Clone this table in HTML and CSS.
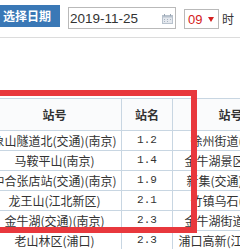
FILE: index.html
```html
<!DOCTYPE html>
<html lang="zh-CN">
<head>
<meta charset="utf-8">
<link rel="stylesheet" href="styles.css">
</head>
<body>
<div class="toolbar">
  <span class="btn">选择日期</span>
  <span class="date-input">
    <span class="date-text">2019-11-25</span>
    <svg class="cal" width="11" height="10" viewBox="0 0 11 10">
      <rect x="0.5" y="1.5" width="10" height="8" fill="#e4e8ee" stroke="#b8c2cd"/>
      <rect x="0.5" y="1.5" width="10" height="2" fill="#b8c2cd"/>
      <rect x="2" y="0" width="1" height="2" fill="#9aa6b3"/>
      <rect x="8" y="0" width="1" height="2" fill="#9aa6b3"/>
      <path d="M2 5h1v1H2zM5 5h1v1H5zM8 5h1v1H8zM2 7h1v1H2zM5 7h1v1H5z" fill="#a9b4c0"/>
    </svg>
  </span>
  <span class="select"><span class="sel-val">09</span><span class="caret"></span></span>
  <span class="unit">时</span>
</div>
<div class="content">
  <table class="grid">
    <colgroup><col class="c1"><col class="c2"><col class="c3"></colgroup>
    <thead>
      <tr><th>站号</th><th>站名</th><th>站号</th></tr>
    </thead>
    <tbody>
      <tr><td>象山隧道北(交通)(南京)</td><td class="num">1.2</td><td>徐州街道(南京)</td></tr>
      <tr><td>马鞍平山(南京)</td><td class="num">1.4</td><td>金牛湖景区(南京)</td></tr>
      <tr><td>中合张店站(交通)(南京)</td><td class="num">1.9</td><td>新集(交通)(南京)</td></tr>
      <tr><td>龙王山(江北新区)</td><td class="num">2.1</td><td>竹镇乌石(南京)</td></tr>
      <tr><td>金牛湖(交通)(南京)</td><td class="num">2.3</td><td>金牛湖街道(南京)</td></tr>
      <tr><td>老山林区(浦口)</td><td class="num">2.3</td><td>浦口高新(江北新区)</td></tr>
    </tbody>
  </table>
  <div class="highlight"></div>
</div>
</body>
</html>
```

FILE: styles.css
```css
html, body {
  margin: 0;
  padding: 0;
  background: #fff;
  overflow: hidden;
}
body {
  width: 240px;
  height: 249px;
  font-family: "Noto Sans CJK SC", "Liberation Sans", sans-serif;
  color: #333;
}
.toolbar {
  display: flex;
  align-items: flex-start;
  height: 38px;
  border-bottom: 1px solid #dcdcdc;
  box-sizing: border-box;
}
.btn {
  margin-top: 5px;
  width: 60px;
  height: 22px;
  box-sizing: border-box;
  padding-left: 3px;
  background: #3a78b6;
  color: #fff;
  font-weight: bold;
  font-size: 12px;
  line-height: 22px;
  white-space: nowrap;
}
.date-input {
  margin-top: 7px;
  margin-left: 8px;
  width: 108px;
  height: 22px;
  box-sizing: border-box;
  border: 1px solid #b9b9b9;
  display: flex;
  align-items: center;
  padding-left: 1px;
}
.date-text {
  font-family: "Liberation Sans", sans-serif;
  font-size: 13.5px;
  color: #333;
  flex: 1;
}
.cal {
  margin-right: 2px;
  margin-top: 1px;
}
.select {
  margin-top: 9px;
  margin-left: 8px;
  width: 35px;
  height: 20px;
  box-sizing: border-box;
  border: 1px solid #b9b9b9;
  display: flex;
  align-items: center;
  padding-left: 3px;
}
.sel-val {
  font-family: "Liberation Sans", sans-serif;
  font-size: 13px;
  color: #d42020;
}
.caret {
  margin-left: 6px;
  width: 0;
  height: 0;
  border-left: 3px solid transparent;
  border-right: 3px solid transparent;
  border-top: 5px solid #d42020;
}
.unit {
  margin-top: 10px;
  margin-left: 3px;
  font-size: 12px;
  line-height: 17px;
  color: #333;
}
.content {
  position: relative;
  padding-top: 60px;
}
.grid {
  margin-left: -13px;
  border-collapse: collapse;
  table-layout: fixed;
  width: 301px;
}
.c1 { width: 134px; }
.c2 { width: 51px; }
.c3 { width: 116px; }
.grid th, .grid td {
  border: 1px solid #c8d6e2;
  text-align: center;
  white-space: nowrap;
  overflow: hidden;
  padding: 0;
  font-size: 12px;
}
.grid th {
  height: 31px;
  font-weight: bold;
  background: #fafbfc;
  color: #333;
}
.grid td {
  height: 19px;
  line-height: 19px;
  color: #333;
}
.grid td.num {
  font-family: "Liberation Mono", monospace;
  font-size: 11px;
}
.highlight {
  position: absolute;
  left: -12px;
  top: 52px;
  width: 209px;
  height: 143px;
  box-sizing: border-box;
  border: 6px solid #e8383d;
}
```
